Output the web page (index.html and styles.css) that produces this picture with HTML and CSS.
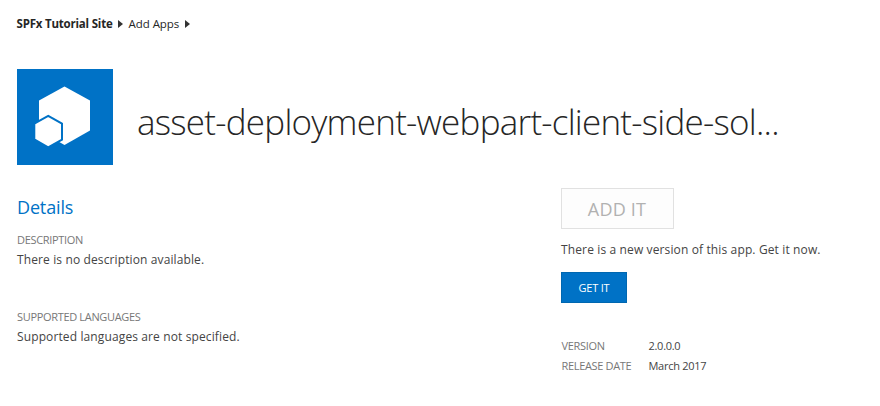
FILE: index.html
```html
<!DOCTYPE html>
<html lang="en">
<head>
<meta charset="utf-8">
<title>Add Apps</title>
<link rel="stylesheet" href="styles.css">
</head>
<body>
<nav class="breadcrumb">
  <span class="site">SPFx Tutorial Site</span>
  <svg class="arrow" width="5" height="8" viewBox="0 0 5 8"><path d="M0 0L5 4L0 8Z"/></svg>
  <span class="crumb">Add Apps</span>
  <svg class="arrow" width="5" height="8" viewBox="0 0 5 8"><path d="M0 0L5 4L0 8Z"/></svg>
</nav>
<header class="app-header">
  <svg class="app-icon" width="96" height="96" viewBox="0 0 96 96">
    <rect width="96" height="96" fill="#0072c6"/>
    <path d="M47.5 17.5L73 31.5V61.5L47.5 76L22 61.5V31.5Z" fill="#fff"/>
    <path d="M31.2 46.8L45 54.7V70.6L31.2 78.3L17.3 70.3V54.7Z" fill="#fff" stroke="#0072c6" stroke-width="2"/>
  </svg>
  <h1 class="title">asset-deployment-webpart-client-side-sol...</h1>
</header>
<main class="content">
  <section class="details">
    <h2 class="heading">Details</h2>
    <div class="label">DESCRIPTION</div>
    <p class="text">There is no description available.</p>
    <div class="label languages">SUPPORTED LANGUAGES</div>
    <p class="text">Supported languages are not specified.</p>
  </section>
  <aside class="actions">
    <button class="add" disabled>ADD IT</button>
    <p class="notice">There is a new version of this app. Get it now.</p>
    <button class="get">GET IT</button>
    <dl class="meta">
      <dt>VERSION</dt><dd>2.0.0.0</dd>
      <dt>RELEASE DATE</dt><dd>March 2017</dd>
    </dl>
  </aside>
</main>
</body>
</html>
```
FILE: styles.css
```css
* { box-sizing: border-box; }
body {
  margin: 0;
  padding: 14px 0 0 17px;
  background: #fff;
  color: #444;
  font-family: "Open Sans", "Noto Sans", sans-serif;
  font-size: 12px;
}
h1, h2, p, dl, dd { margin: 0; font-weight: 400; }
.breadcrumb {
  display: flex;
  align-items: center;
  height: 19px;
  font-size: 11.5px;
  color: #262626;
  white-space: nowrap;
}
.site { font-weight: 700; width: 101px; margin-left: -0.5px; margin-right: 0.5px; letter-spacing: -0.2px; }
.crumb { margin-left: 5.5px; width: 56.5px; letter-spacing: -0.05px; }
.arrow { fill: #333; flex: none; }
.app-header {
  display: flex;
  margin-top: 36px;
  height: 96px;
}
.app-icon { flex: none; display: block; }
.title {
  margin-left: 24px;
  padding-top: 28px;
  line-height: 50px;
  font-size: 35px;
  font-weight: 300;
  color: #262626;
  white-space: nowrap;
  letter-spacing: -0.76px;
}
.content { display: flex; }
.details { width: 544px; padding-top: 29px; }
.heading { font-size: 18px; line-height: 27px; color: #0072c6; letter-spacing: -0.15px; }
.label { margin-top: 9px; font-size: 11px; line-height: 20px; color: #777; letter-spacing: -0.33px; }
.text { line-height: 19px; letter-spacing: 0.12px; }
.languages { margin-top: 38px; }
.actions { padding-top: 23px; }
button { display: block; font-family: inherit; padding: 0; }
.add {
  width: 113px;
  height: 41px;
  border: 1px solid #e1e1e1;
  background: #fdfdfd;
  color: #b1b1b1;
  font-size: 18px;
  letter-spacing: 0.2px;
  padding-right: 1px;
}
.notice { margin-top: 11px; line-height: 20px; white-space: nowrap; letter-spacing: 0.13px; }
.get {
  margin-top: 12px;
  width: 66px;
  height: 31px;
  border: 1px solid #0067b0;
  background: #0072c6;
  color: #fff;
  font-size: 11px;
  letter-spacing: -0.2px;
}
.meta {
  display: grid;
  grid-template-columns: 87px auto;
  margin-top: 33px;
  margin-left: 0.5px;
  line-height: 20px;
  font-size: 11px;
}
.meta dt { color: #777; letter-spacing: -0.33px; }
.meta dd { letter-spacing: -0.28px; }
```
